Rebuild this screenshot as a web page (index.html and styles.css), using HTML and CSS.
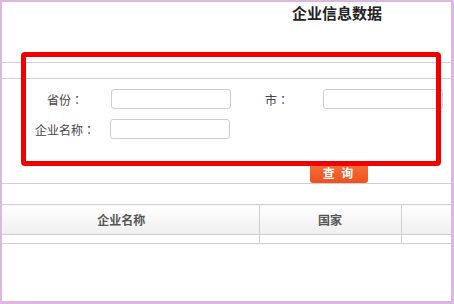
FILE: index.html
```html
<!DOCTYPE html>
<html lang="zh-CN">
<head>
<meta charset="utf-8">
<title>企业信息数据</title>
<link rel="stylesheet" href="styles.css">
</head>
<body>
<div class="page">
  <div class="title">企业信息数据</div>
  <div class="bar"></div>
  <div class="form">
    <label class="lbl">省份<span class="colon" lang="zh-TW">：</span></label>
    <input class="inp" type="text">
    <label class="lbl">市<span class="colon" lang="zh-TW">：</span></label>
    <input class="inp" type="text">
    <label class="lbl">企业名称<span class="colon" lang="zh-TW">：</span></label>
    <input class="inp inp-shift" type="text">
  </div>
  <div class="actions">
    <button class="btn" type="button">查 询</button>
  </div>
  <div class="spacer"></div>
  <table class="grid">
    <colgroup><col class="c1"><col class="c2"><col class="c3"></colgroup>
    <thead>
      <tr><th class="th-first">企业名称</th><th>国家</th><th></th></tr>
    </thead>
    <tbody>
      <tr><td></td><td></td><td></td></tr>
    </tbody>
  </table>
  <div class="mark"></div>
</div>
</body>
</html>
```
FILE: styles.css
```css
html, body {
  margin: 0;
  padding: 0;
  background: #fff;
}
body {
  font-family: "Noto Sans CJK SC", "Noto Sans", sans-serif;
  color: #444;
}
.page {
  position: relative;
  width: 454px;
  height: 304px;
  box-sizing: border-box;
  border: 2px solid #dbb7e1;
  border-right-width: 3px;
  border-bottom-width: 3px;
  overflow: hidden;
}
.title {
  height: 60px;
  padding-left: 290px;
  box-sizing: border-box;
  font-size: 15px;
  font-weight: bold;
  line-height: 22px;
  color: #222;
}
.bar {
  height: 15px;
  border-top: 1px solid #cfcfcf;
  border-bottom: 1px solid #cfcfcf;
}
.form {
  display: grid;
  grid-template-columns: 90px 122px 90px 1fr;
  grid-auto-rows: 30px;
  align-items: center;
  margin-left: 18px;
  padding-top: 5px;
}
.lbl {
  text-align: center;
  font-size: 12px;
  color: #444;
}
.colon {
  font-family: "Noto Sans CJK TC", "Noto Sans CJK SC", sans-serif;
}
.inp {
  width: 120px;
  height: 20px;
  box-sizing: border-box;
  margin: 0 0 0 1px;
  border: 1px solid #cdcdcd;
  border-radius: 3px;
  background: #fff;
  padding: 0 4px;
}
.inp-shift {
  margin-left: 0;
}
.actions {
  height: 40px;
  box-sizing: border-box;
  padding-top: 18px;
  padding-left: 308px;
  border-bottom: 1px solid #cfcfcf;
}
.btn {
  display: block;
  width: 58px;
  height: 21px;
  padding: 0;
  border: 0;
  border-radius: 3px;
  background: linear-gradient(#f7733d, #ec5120);
  color: #fff;
  font-family: "Noto Sans CJK SC", sans-serif;
  font-size: 12px;
  font-weight: bold;
  letter-spacing: 2px;
  line-height: 21px;
}
.spacer {
  height: 20px;
}
.grid {
  width: 480px;
  table-layout: fixed;
  border-collapse: collapse;
}
.c1 { width: 257px; }
.c2 { width: 142px; }
.c3 { width: 81px; }
.grid th {
  height: 29px;
  padding: 0;
  border: 1px solid #cfcfcf;
  border-left: 0;
  background: linear-gradient(#ffffff, #efefef);
  font-size: 12px;
  font-weight: bold;
  color: #555;
  text-align: center;
}
.grid th.th-first {
  padding-right: 18px;
}
.grid td {
  height: 8px;
  padding: 0;
  border: 1px solid #cfcfcf;
  border-left: 0;
  border-top: 0;
}
.mark {
  position: absolute;
  left: 19px;
  top: 50px;
  width: 420px;
  height: 114px;
  box-sizing: border-box;
  border: 5px solid #f20000;
  border-radius: 4px;
}
```
